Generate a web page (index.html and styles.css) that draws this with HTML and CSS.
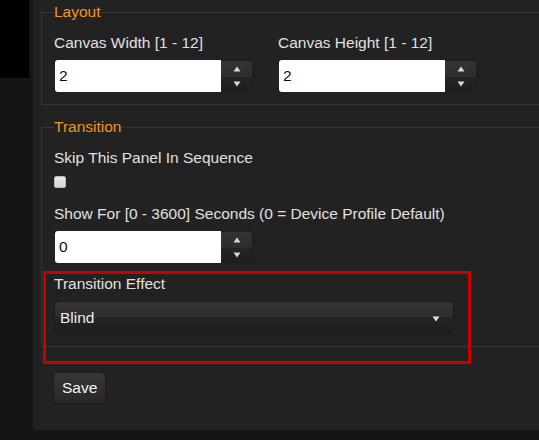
FILE: index.html
```html
<!DOCTYPE html>
<html>
<head>
<meta charset="utf-8">
<link rel="stylesheet" href="styles.css">
</head>
<body>
<div class="page">
  <aside class="side"><div class="side-block"></div></aside>
  <main class="panel">
    <fieldset class="group">
      <legend>Layout</legend>
      <div class="cols">
        <div class="field">
          <label class="lbl">Canvas Width [1 - 12]</label>
          <div class="spin">
            <input class="num" type="text" value="2">
            <div class="spin-btns">
              <span class="spin-up"><svg width="8" height="6" viewBox="0 0 8 6"><path d="M4 0.5 L7.5 5.5 L0.5 5.5 Z" fill="#d8d8d8"/></svg></span>
              <span class="spin-down"><svg width="8" height="6" viewBox="0 0 8 6"><path d="M0.5 0.5 L7.5 0.5 L4 5.5 Z" fill="#d8d8d8"/></svg></span>
            </div>
          </div>
        </div>
        <div class="field">
          <label class="lbl">Canvas Height [1 - 12]</label>
          <div class="spin">
            <input class="num" type="text" value="2">
            <div class="spin-btns">
              <span class="spin-up"><svg width="8" height="6" viewBox="0 0 8 6"><path d="M4 0.5 L7.5 5.5 L0.5 5.5 Z" fill="#d8d8d8"/></svg></span>
              <span class="spin-down"><svg width="8" height="6" viewBox="0 0 8 6"><path d="M0.5 0.5 L7.5 0.5 L4 5.5 Z" fill="#d8d8d8"/></svg></span>
            </div>
          </div>
        </div>
      </div>
    </fieldset>

    <fieldset class="group group-transition">
      <legend>Transition</legend>
      <div class="field field-check">
        <label class="lbl">Skip This Panel In Sequence</label>
        <input class="check" type="checkbox">
      </div>
      <div class="field field-show">
        <label class="lbl">Show For [0 - 3600] Seconds (0 = Device Profile Default)</label>
        <div class="spin">
          <input class="num" type="text" value="0">
          <div class="spin-btns">
            <span class="spin-up"><svg width="8" height="6" viewBox="0 0 8 6"><path d="M4 0.5 L7.5 5.5 L0.5 5.5 Z" fill="#d8d8d8"/></svg></span>
            <span class="spin-down"><svg width="8" height="6" viewBox="0 0 8 6"><path d="M0.5 0.5 L7.5 0.5 L4 5.5 Z" fill="#d8d8d8"/></svg></span>
          </div>
        </div>
      </div>
      <div class="field field-effect">
        <div class="highlight"></div>
        <label class="lbl">Transition Effect</label>
        <div class="select">
          <span class="select-value">Blind</span>
          <svg class="select-arrow" width="8" height="6" viewBox="0 0 8 6"><path d="M0.5 0.5 L7.5 0.5 L4 5.5 Z" fill="#e0e0e0"/></svg>
        </div>
      </div>
    </fieldset>

    <button class="btn-save" type="button">Save</button>
  </main>
</div>
</body>
</html>
```

FILE: styles.css
```css
html, body {
  margin: 0;
  padding: 0;
  overflow: hidden;
  background: #151515;
  font-family: "Liberation Sans", Arial, sans-serif;
  font-size: 15.5px;
  line-height: 18px;
  color: #dcdcdc;
}

.page {
  display: grid;
  grid-template-columns: 33px 1fr;
  align-items: start;
  width: 539px;
}

.side-block {
  width: 29px;
  height: 78px;
  background: #000;
}

.panel {
  background: #222222;
  padding: 3px 0 26px 8px;
  height: 401px;
}

.group {
  box-sizing: border-box;
  margin: 0 0 13px 0;
  padding: 13px 12px 12px 12px;
  border: 1px solid #363636;
  border-right: none;
  min-width: 0;
}

.group legend {
  padding: 0;
  color: #f4921e;
  font-size: 15.5px;
  line-height: 18px;
}

.cols {
  display: grid;
  grid-template-columns: 224px 224px;
}

.field {
  display: flex;
  flex-direction: column;
  align-items: flex-start;
}

.lbl {
  display: block;
  margin-bottom: 8px;
  color: #e0e0e0;
}

.spin {
  display: flex;
  width: 198px;
  height: 32px;
  margin-left: 1px;
}

.num {
  width: 166px;
  height: 32px;
  box-sizing: border-box;
  border: none;
  border-radius: 3px 0 0 3px;
  background: #ffffff;
  padding: 0 0 0 4px;
  margin: 0;
  font-family: "Liberation Sans", Arial, sans-serif;
  font-size: 15.5px;
  color: #111;
  outline: none;
}

.spin-btns {
  width: 32px;
  height: 32px;
  box-sizing: border-box;
  border: 1px solid #1c1c1c;
  border-left: none;
  border-radius: 0 4px 4px 0;
  overflow: hidden;
  display: flex;
  flex-direction: column;
}

.spin-up, .spin-down {
  flex: 1;
  display: flex;
  align-items: center;
  justify-content: center;
}

.spin-up {
  background: linear-gradient(#343434, #2c2c2c);
  padding-top: 1px;
}

.spin-down {
  background: linear-gradient(#242424, #1e1e1e);
}

.field-check {
  margin-bottom: 17px;
}

.field-show {
  margin-bottom: 12px;
}

.check {
  appearance: none;
  -webkit-appearance: none;
  width: 12px;
  height: 12px;
  margin: 1px 0 0 0;
  box-sizing: border-box;
  border: 1px solid #b8b8b8;
  border-radius: 2px;
  background: linear-gradient(#e8e8e8, #d4d4d4);
}

.field-effect {
  position: relative;
}

.highlight {
  position: absolute;
  top: -4px;
  left: -11px;
  width: 428px;
  height: 93px;
  box-sizing: border-box;
  border: 3px solid #c80000;
  pointer-events: none;
}

.select {
  position: relative;
  width: 400px;
  height: 33px;
  box-sizing: border-box;
  border: 1px solid #1c1c1c;
  border-radius: 4px;
  background: linear-gradient(#353535 0%, #2d2d2d 48%, #232323 52%, #1e1e1e 100%);
  display: flex;
  align-items: center;
  padding-left: 5px;
  color: #eeeeee;
}

.select-arrow {
  position: absolute;
  right: 13px;
  top: 14px;
}

.btn-save {
  display: block;
  margin: 25px 0 0 12px;
  height: 32px;
  padding: 0 8px;
  border: 1px solid #1c1c1c;
  border-radius: 4px;
  background: linear-gradient(#363636, #282828);
  color: #f2f2f2;
  font-family: "Liberation Sans", Arial, sans-serif;
  font-size: 15.5px;
}
```
